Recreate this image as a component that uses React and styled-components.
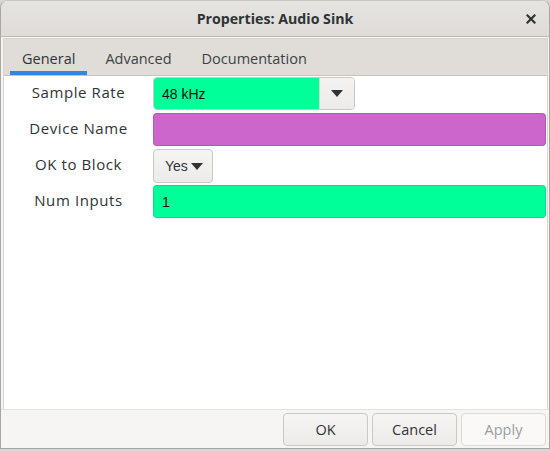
import styled, { createGlobalStyle } from "styled-components";

const GlobalStyle = createGlobalStyle`
  html, body {
    margin: 0;
    padding: 0;
    background: #d6d6d6;
  }
  body {
    font-family: "Open Sans", "Noto Sans", sans-serif;
    color: #2e3436;
  }
`;

// GRC type colours
const typeColors = {
  int: "#00ff99",
  string: "#cc66cc",
};

const Window = styled.div`
  width: 550px;
  height: 449px;
  box-sizing: border-box;
  display: flex;
  flex-direction: column;
  background: #f6f5f4;
  border: 1px solid #a9a7a4;
  border-top-color: #c9c6c2;
  border-radius: 8px 8px 0 0;
  overflow: hidden;
`;

const TitleBar = styled.div`
  height: 35px;
  flex: none;
  display: grid;
  grid-template-columns: 40px 1fr 40px;
  align-items: center;
  background: linear-gradient(#e6e4e1, #dedbd8);
  border-bottom: 1px solid #bdb8b2;
`;

const Title = styled.div`
  grid-column: 2;
  text-align: center;
  font-family: "Open Sans", "Noto Sans", sans-serif;
  font-weight: 700;
  font-size: 14.2px;
  color: #2e3436;
`;

const CloseButton = styled.div`
  justify-self: center;
  display: flex;
  align-items: center;
  justify-content: center;
  margin-left: 4px;
  color: #2e3436;
`;

const Body = styled.div`
  flex: 1;
  display: flex;
  flex-direction: column;
  padding: 1px 1px 0 2px;
  background: #f6f5f4;
`;

const Notebook = styled.div`
  flex: 1;
  display: flex;
  flex-direction: column;
  border: 1px solid #d8d4d0;
  border-bottom: none;
  background: #ffffff;
`;

const TabBar = styled.div`
  height: 36px;
  flex: none;
  display: flex;
  align-items: stretch;
  gap: 6px;
  padding-left: 6px;
  background: #e0ddd9;
  border-bottom: 1px solid #c8c4bf;
`;

const Tab = styled.div`
  display: flex;
  align-items: center;
  padding: 2px 12px 0;
  font-size: 14.5px;
  color: ${(p) => (p.$active ? "#2e3436" : "#3b4244")};
  box-shadow: ${(p) => (p.$active ? "inset 0 -4px 0 #3584e4" : "none")};
`;

const Panel = styled.div`
  flex: 1;
  display: grid;
  grid-template-columns: 149px 1fr;
  grid-auto-rows: 33px;
  row-gap: 3px;
  align-content: start;
  padding: 1px 0 0 0;
`;

const Label = styled.div`
  display: flex;
  align-items: center;
  justify-content: center;
  padding-bottom: 3px;
  font-size: 15px;
  letter-spacing: 0.6px;
  color: #2e3436;
`;

const Field = styled.div`
  display: flex;
  align-items: center;
  box-sizing: border-box;
  margin-right: 1px;
  padding-left: 8px;
  background: ${(p) => p.$color};
  border: 1px solid rgba(0, 0, 0, 0.12);
  border-radius: 4px;
  font-family: "Liberation Sans", Arial, sans-serif;
  font-size: 14px;
  color: #111;
`;

const Combo = styled.div`
  display: flex;
  width: 202px;
  box-sizing: border-box;
  border: 1px solid #cdc7c2;
  border-radius: 4px;
  overflow: hidden;
`;

const ComboEntry = styled.div`
  flex: 1;
  display: flex;
  align-items: center;
  padding-left: 8px;
  background: ${(p) => p.$color};
  font-family: "Liberation Sans", Arial, sans-serif;
  font-size: 14px;
  color: #111;
`;

const ComboArrow = styled.div`
  width: 34px;
  display: flex;
  align-items: center;
  justify-content: center;
  background: linear-gradient(#f4f3f2, #edebe9);
  border-left: 1px solid #d8d4d0;
`;

const DropButton = styled.div`
  justify-self: start;
  display: flex;
  align-items: center;
  gap: 3px;
  box-sizing: border-box;
  width: 60px;
  height: 34px;
  padding: 0 0 0 11px;
  border: 1px solid #cdc7c2;
  border-radius: 4px;
  background: linear-gradient(#f6f5f4, #edebe9);
  font-family: "Liberation Sans", Arial, sans-serif;
  font-size: 14px;
  color: #2e3436;
`;

const Footer = styled.div`
  height: 38px;
  flex: none;
  display: flex;
  justify-content: flex-end;
  align-items: center;
  gap: 4px;
  padding: 0 3px 0 0;
  background: #f6f5f4;
  border-top: 1px solid #e4e1de;
`;

const Button = styled.div`
  width: 85px;
  height: 33px;
  box-sizing: border-box;
  display: flex;
  align-items: center;
  justify-content: center;
  border: 1px solid ${(p) => (p.$disabled ? "#dedad6" : "#cdc7c2")};
  border-radius: 4px;
  background: ${(p) =>
    p.$disabled ? "#faf9f8" : "linear-gradient(#f6f5f4, #edebe9)"};
  font-size: 14.5px;
  color: ${(p) => (p.$disabled ? "#9a9e9f" : "#2e3436")};
`;

const Caret = () => (
  <svg width="12" height="7" viewBox="0 0 12 7">
    <path d="M0 0 H12 L6 7 Z" fill="#2e3436" />
  </svg>
);

const CloseIcon = () => (
  <svg width="10" height="10" viewBox="0 0 10 10">
    <path
      d="M1.5 1.5 L8.5 8.5 M8.5 1.5 L1.5 8.5"
      stroke="#2e3436"
      strokeWidth="2.2"
      strokeLinecap="square"
    />
  </svg>
);

export default function App() {
  return (
    <>
      <GlobalStyle />
      <Window>
        <TitleBar>
          <Title>Properties: Audio Sink</Title>
          <CloseButton>
            <CloseIcon />
          </CloseButton>
        </TitleBar>
        <Body>
          <Notebook>
            <TabBar>
              <Tab $active>General</Tab>
              <Tab>Advanced</Tab>
              <Tab>Documentation</Tab>
            </TabBar>
            <Panel>
              <Label>Sample Rate</Label>
              <Combo>
                <ComboEntry $color={typeColors.int}>48 kHz</ComboEntry>
                <ComboArrow>
                  <Caret />
                </ComboArrow>
              </Combo>

              <Label>Device Name</Label>
              <Field $color={typeColors.string} />

              <Label>OK to Block</Label>
              <DropButton>
                Yes
                <Caret />
              </DropButton>

              <Label>Num Inputs</Label>
              <Field $color={typeColors.int}>1</Field>
            </Panel>
          </Notebook>
        </Body>
        <Footer>
          <Button>OK</Button>
          <Button>Cancel</Button>
          <Button $disabled>Apply</Button>
        </Footer>
      </Window>
    </>
  );
}
